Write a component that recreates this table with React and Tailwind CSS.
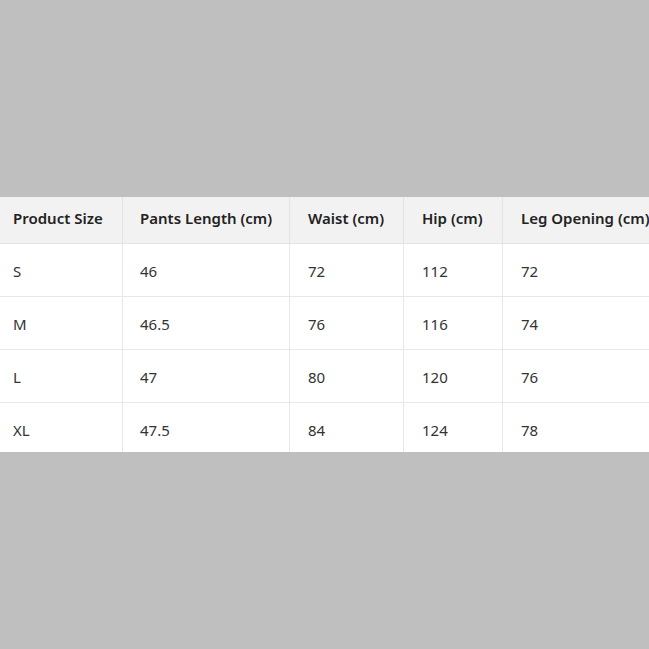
export default function App() {
  const headers = ["Product Size", "Pants Length (cm)", "Waist (cm)", "Hip (cm)", "Leg Opening (cm)"];
  const rows = [
    ["S", "46", "72", "112", "72"],
    ["M", "46.5", "76", "116", "74"],
    ["L", "47", "80", "120", "76"],
    ["XL", "47.5", "84", "124", "78"],
  ];
  const widths = ["w-[123px]", "w-[167px]", "w-[114px]", "w-[99px]", "w-[180px]"];
  const pads = ["pl-[13px]", "pl-[17px]", "pl-[18px]", "pl-[18px]", "pl-[18px]"];
  return (
    <div className="w-[649px] h-[649px] bg-[#bfbfbf] flex items-center overflow-hidden" style={{ fontFamily: '"Noto Sans", "Open Sans", sans-serif' }}>
      <div className="h-[255px] w-[649px] overflow-hidden bg-white">
        <div className="flex w-max h-[47px] bg-[#f2f2f2] border-b border-[#e3e3e3]">
          {headers.map((h, i) => (
            <div key={i} className={`${widths[i]} ${pads[i]} pb-[3px] shrink-0 flex items-center text-[15px] font-semibold text-[#222] ${i < 4 ? "border-r border-[#e3e3e3]" : ""}`}>
              <span className="whitespace-nowrap">{h}</span>
            </div>
          ))}
        </div>
        {rows.map((r, ri) => (
          <div key={ri} className="flex w-max h-[53px] border-b border-[#e8e8e8]">
            {r.map((c, i) => (
              <div key={i} className={`${widths[i]} ${pads[i]} pt-[2px] shrink-0 flex items-center text-[15px] text-[#333] ${i < 4 ? "border-r border-[#e8e8e8]" : ""}`}>
                {c}
              </div>
            ))}
          </div>
        ))}
      </div>
    </div>
  );
}
